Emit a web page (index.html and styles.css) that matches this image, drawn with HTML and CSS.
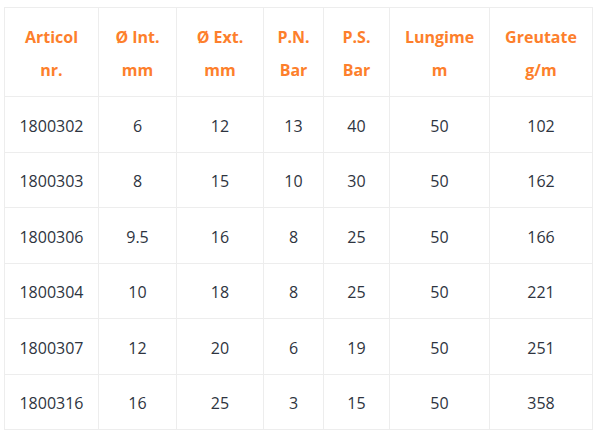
FILE: index.html
```html
<!DOCTYPE html>
<html>
<head>
<meta charset="utf-8">
<link rel="stylesheet" href="styles.css">
</head>
<body>
<table class="spec">
<colgroup>
<col class="c1"><col class="c2"><col class="c3"><col class="c4"><col class="c5"><col class="c6"><col class="c7">
</colgroup>
<thead>
<tr><th>Articol<br>nr.</th><th>Ø Int.<br>mm</th><th>Ø Ext.<br>mm</th><th>P.N.<br>Bar</th><th>P.S.<br>Bar</th><th>Lungime<br>m</th><th>Greutate<br>g/m</th></tr>
</thead>
<tbody>
<tr><td>1800302</td><td>6</td><td>12</td><td>13</td><td>40</td><td>50</td><td>102</td></tr>
<tr><td>1800303</td><td>8</td><td>15</td><td>10</td><td>30</td><td>50</td><td>162</td></tr>
<tr><td>1800306</td><td>9.5</td><td>16</td><td>8</td><td>25</td><td>50</td><td>166</td></tr>
<tr><td>1800304</td><td>10</td><td>18</td><td>8</td><td>25</td><td>50</td><td>221</td></tr>
<tr><td>1800307</td><td>12</td><td>20</td><td>6</td><td>19</td><td>50</td><td>251</td></tr>
<tr><td>1800316</td><td>16</td><td>25</td><td>3</td><td>15</td><td>50</td><td>358</td></tr>
</tbody>
</table>
</body>
</html>
```
FILE: styles.css
```css
html, body { background: #fff; }
body { margin: 0; padding: 7px 4px; font-family: "Open Sans", "Noto Sans", sans-serif; }
.spec { border-collapse: collapse; table-layout: fixed; width: 588px; }
.c1 { width: 94px; } .c2 { width: 78px; } .c3 { width: 87px; } .c4 { width: 60px; }
.c5 { width: 66px; } .c6 { width: 100px; } .c7 { width: 103px; }
.spec th, .spec td { border: 1px solid #ededed; text-align: center; line-height: 33px; }
.spec th { color: #fd7f2c; font-weight: 700; font-size: 16px; padding: 13px 0 9px; }
.spec td { color: #2e3440; font-size: 16px; padding: 12.5px 0 9px; }
```
